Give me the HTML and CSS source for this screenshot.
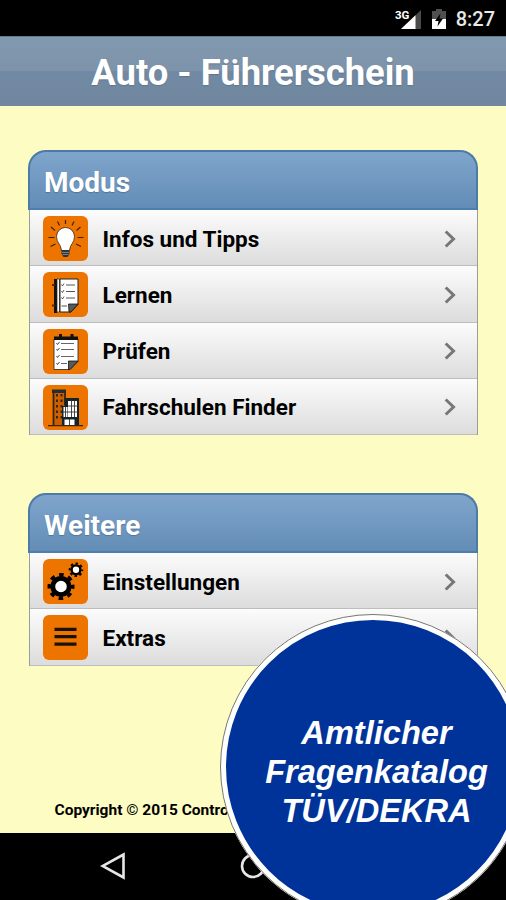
FILE: index.html
```html
<!DOCTYPE html>
<html lang="de">
<head>
<meta charset="utf-8">
<title>Auto - Führerschein</title>
<link rel="stylesheet" href="styles.css">
</head>
<body>
<div class="screen">
  <div class="status">
    <svg class="signal" width="28" height="22" viewBox="0 0 28 22">
      <path d="M6 21 26 2V21Z" fill="#4a4a4a"/>
      <path d="M6 21 20.500 7.200V21Z" fill="#fff"/>
      <text x="0" y="10.500" class="net">3G</text>
    </svg>
    <svg class="battery" width="14" height="20" viewBox="0 0 14 20">
      <path d="M0 2H4V0H10V2H14V20H0Z" fill="#505050"/>
      <path d="M0 10H14V20H0Z" fill="#fff"/>
      <path d="M8.500 4.500 3 12H6.500L5.500 17.500 11 9.500H7.500Z" fill="#000"/>
    </svg>
    <span class="time">8:27</span>
  </div>
  <header class="title"><h1>Auto - Führerschein</h1></header>
  <main class="content">
    <section class="panel">
      <h2>Modus</h2>
      <ul>
        <li>
          <svg class="icon" viewBox="0 0 45 45">
            <g stroke="#3a2410" stroke-width="1.200"><path d="M22.500 4V8M14.500 5.500 16.500 9.500M31 5.500 29 9.500M8 11 12 14.500M37.500 11 33.500 14.500M5.500 21.500H11.500M34.500 21.500H40.500M7.500 30.500 12.500 28M38 30.500 33 28"/></g>
            <path d="M18.500 34.500C18 28 13.500 27 13.500 20.500A9 9 0 0 1 31.500 20.500C31.500 27 27 28 26.500 34.500Z" fill="#fff" stroke="#3a2410" stroke-width=".8"/>
            <path d="M18.500 34H26.500V38L24.500 41H20.500L18.500 38Z" fill="#30343a"/>
            <path d="M19 36.500H26M19.500 38.500H25.500" stroke="#8e9698" stroke-width=".8"/>
          </svg>
          <span>Infos und Tipps</span>
          <svg class="arrow" viewBox="0 0 12 18"><path d="M1.700 1.500 9.500 9 1.700 16.500"/></svg>
        </li>
        <li>
          <svg class="icon" viewBox="0 0 45 45">
            <path d="M11 7H14V41H11Z" fill="#111"/>
            <path d="M9 13H12M9 33.500H12" stroke="#5c2300" stroke-width="2"/>
            <path d="M14 7H16.500V40H14Z" fill="#fff" stroke="#222" stroke-width=".7"/>
            <path d="M17 7H35V32.500L28 40H17Z" fill="#fff" stroke="#222" stroke-width="1"/>
            <path d="M35 32H25.500L26 40H28Z" fill="#555b5b" stroke="#111" stroke-width=".8"/>
            <path d="M23 13H32M23 19.500H32M23 26H32M18.500 34H24" stroke="#555" stroke-width="1.100"/>
            <path d="M18.500 12.500 19.500 14 21 11.500M18.500 19 19.500 20.500 21 18M18.500 25.500 19.500 27 21 24.500" stroke="#333" fill="none" stroke-width=".8"/>
          </svg>
          <span>Lernen</span>
          <svg class="arrow" viewBox="0 0 12 18"><path d="M1.700 1.500 9.500 9 1.700 16.500"/></svg>
        </li>
        <li>
          <svg class="icon" viewBox="0 0 45 45">
            <path d="M11 10H35V32.500L27 40.500H11Z" fill="#fff" stroke="#222" stroke-width=".8"/>
            <path d="M11 7.500H35V11H11Z" fill="#111"/>
            <path d="M17.500 5V9M29 5V9" stroke="#111" stroke-width="3"/>
            <path d="M35 32H25.500L25.500 40.500H27Z" fill="#555b5b" stroke="#111" stroke-width=".8"/>
            <path d="M18 14.500H31M18 20.500H31M18 27.500H31M18 34.500H24" stroke="#666" stroke-width="1.200"/>
            <path d="M13.500 14 14.500 15.500 16.500 13M13.500 20 14.500 21.500 16.500 19M13.500 27 14.500 28.500 16.500 26M13.500 34 14.500 35.500 16.500 33" stroke="#333" fill="none" stroke-width=".9"/>
          </svg>
          <span>Prüfen</span>
          <svg class="arrow" viewBox="0 0 12 18"><path d="M1.700 1.500 9.500 9 1.700 16.500"/></svg>
        </li>
        <li>
          <svg class="icon" viewBox="0 0 45 45">
            <path d="M5 40.700H40" stroke="#3a2410" stroke-width="1.200"/>
            <path d="M10 40V6.500H22V20" fill="#b95200"/>
            <path d="M10 8H22V22H19V40H10Z" fill="#c95f00"/>
            <path d="M9 4.500H23V8H9Z" fill="#222e30"/>
            <path d="M10.500 8V40M22 8V20" stroke="#3a2410" stroke-width="1.800"/>
            <path d="M14 9V36M18.500 9V36" stroke="#3a2410" stroke-width="2" stroke-dasharray="2.500 3"/>
            <path d="M21.500 13H36V40H19V21H21.500Z" fill="#172326"/>
            <path d="M25 16H34V32H25Z" fill="#fff"/>
            <path d="M20.500 22H24.500V32H20.500ZM21.500 34.500H31.500V40H21.500Z" fill="#fff"/>
            <path d="M28.500 15V32M31.500 15V32M22.500 22V32M20 27H35M25 21H35M26.500 34V40" stroke="#333" stroke-width=".9"/>
          </svg>
          <span>Fahrschulen Finder</span>
          <svg class="arrow" viewBox="0 0 12 18"><path d="M1.700 1.500 9.500 9 1.700 16.500"/></svg>
        </li>
      </ul>
    </section>
    <section class="panel">
      <h2>Weitere</h2>
      <ul>
        <li>
          <svg class="icon" viewBox="0 0 45 45">
            <g fill="#fff" stroke="#000">
              <circle cx="18" cy="27.500" r="8.200" stroke-width="4.800"/>
              <circle cx="18" cy="27.500" r="11.800" fill="none" stroke-width="3.400" stroke-dasharray="4.600 4.668" stroke-dashoffset="2.300"/>
              <circle cx="33" cy="10.800" r="4.400" stroke-width="2.400"/>
              <circle cx="33" cy="10.800" r="6.300" fill="none" stroke-width="2" stroke-dasharray="2.470 2.478" stroke-dashoffset="1.230"/>
            </g>
          </svg>
          <span>Einstellungen</span>
          <svg class="arrow" viewBox="0 0 12 18"><path d="M1.700 1.500 9.500 9 1.700 16.500"/></svg>
        </li>
        <li>
          <svg class="icon" viewBox="0 0 45 45"><path d="M11.500 14.300H33.500M11.500 21.700H33.500M11.500 29.100H33.500" stroke="#1a1208" stroke-width="3.200"/></svg>
          <span>Extras</span>
          <svg class="arrow" viewBox="0 0 12 18"><path d="M1.700 1.500 9.500 9 1.700 16.500"/></svg>
        </li>
      </ul>
    </section>
    <footer class="copyright">Copyright <span class="mark">©</span> 2015 Contro</footer>
  </main>
  <nav class="navbar">
    <svg width="26" height="28" viewBox="0 0 26 28"><path d="M23.500 2.500V25.500L2.500 14Z"/></svg>
    <svg width="26" height="28" viewBox="0 0 26 28"><circle cx="13" cy="14" r="11"/></svg>
  </nav>
  <div class="badge"><p>Amtlicher<br>Fragenkatalog<br>TÜV/DEKRA</p></div>
</div>
</body>
</html>
```
FILE: styles.css
```css
* { box-sizing: border-box; }

body {
  margin: 0;
  font-family: Roboto, "Liberation Sans", sans-serif;
}

.screen {
  position: relative;
  display: flex;
  flex-direction: column;
  width: 506px;
  height: 900px;
  overflow: hidden;
  background: #fdfcc2;
}

.status {
  display: flex;
  flex: 0 0 36px;
  align-items: center;
  justify-content: flex-end;
  padding: 1px 11px 0 0;
  background: #000;
  color: #e8e8e8;
}

.signal { margin-right: 9px; }
.battery { margin-right: 10px; }

.net {
  fill: #fff;
  font-size: 11.5px;
  font-weight: 700;
}

.time {
  font-size: 20px;
  font-weight: 500;
  line-height: 24px;
}

.title {
  display: flex;
  flex: 0 0 70px;
  align-items: center;
  justify-content: center;
  border-top: 1px solid #64788c;
  background: linear-gradient(#8199b0 0, #7d93a9 50%, #7189a3 50%, #71879f 100%);
}

h1 {
  margin: 2px 0 0;
  color: #fff;
  font-size: 36.4px;
  font-weight: 700;
  line-height: 42px;
  white-space: nowrap;
  text-shadow: 0 1px 1px #60758c;
}

.content {
  display: flex;
  flex: 1;
  flex-direction: column;
  gap: 58px;
  padding: 44px 28px 0;
}

h2 {
  height: 60px;
  margin: 0;
  padding: 5px 0 0 14px;
  border: 2px solid #4c7ba8;
  border-bottom-color: #4d7eae;
  border-radius: 18px 18px 0 0;
  background: linear-gradient(#7fa5cc, #638db6);
  color: #fff;
  font-size: 28px;
  font-weight: 700;
  line-height: 52px;
  text-shadow: 0 1px 1px #50759c;
}

ul {
  margin: 0 0 0 1px;
  padding: 0;
  border: solid #9a9ca2;
  border-width: 0 1px;
  list-style: none;
}

li {
  display: flex;
  align-items: center;
  height: 56.25px;
  padding: 2px 21px 0 13px;
  border-bottom: 1.5px solid #bdbdbd;
  background: linear-gradient(#fcfcfc, #dcdcdc);
  color: #000;
  font-size: 22.5px;
  font-weight: 700;
}

.icon {
  width: 45px;
  height: 45px;
  margin-right: 14.5px;
  border-radius: 6px;
  background: #ee7400;
}

.arrow {
  width: 12px;
  height: 18px;
  margin-left: auto;
  fill: none;
  stroke: #777;
  stroke-width: 3;
}

.copyright {
  margin: 76px 0 0 26.5px;
  color: #000;
  font-size: 15.5px;
  font-weight: 700;
  line-height: 20px;
}

.mark { font-weight: 400; }

.navbar {
  display: flex;
  flex: 0 0 67px;
  gap: 114px;
  padding: 19px 0 0 100px;
  background: #000;
  fill: none;
  stroke: #e6e6e6;
  stroke-width: 2.6;
}

.badge {
  position: absolute;
  top: 614px;
  left: 220px;
  display: flex;
  align-items: center;
  justify-content: center;
  width: 306px;
  height: 306px;
  border: 6px solid #fff;
  border-radius: 50%;
  outline: 1px solid #77776c;
  outline-offset: -1px;
  background: #003399;
  color: #fff;
}

.badge p {
  margin: 9px 0 0 7px;
  font: italic 700 32.6px/39px "Liberation Sans", sans-serif;
  text-align: center;
}
```
